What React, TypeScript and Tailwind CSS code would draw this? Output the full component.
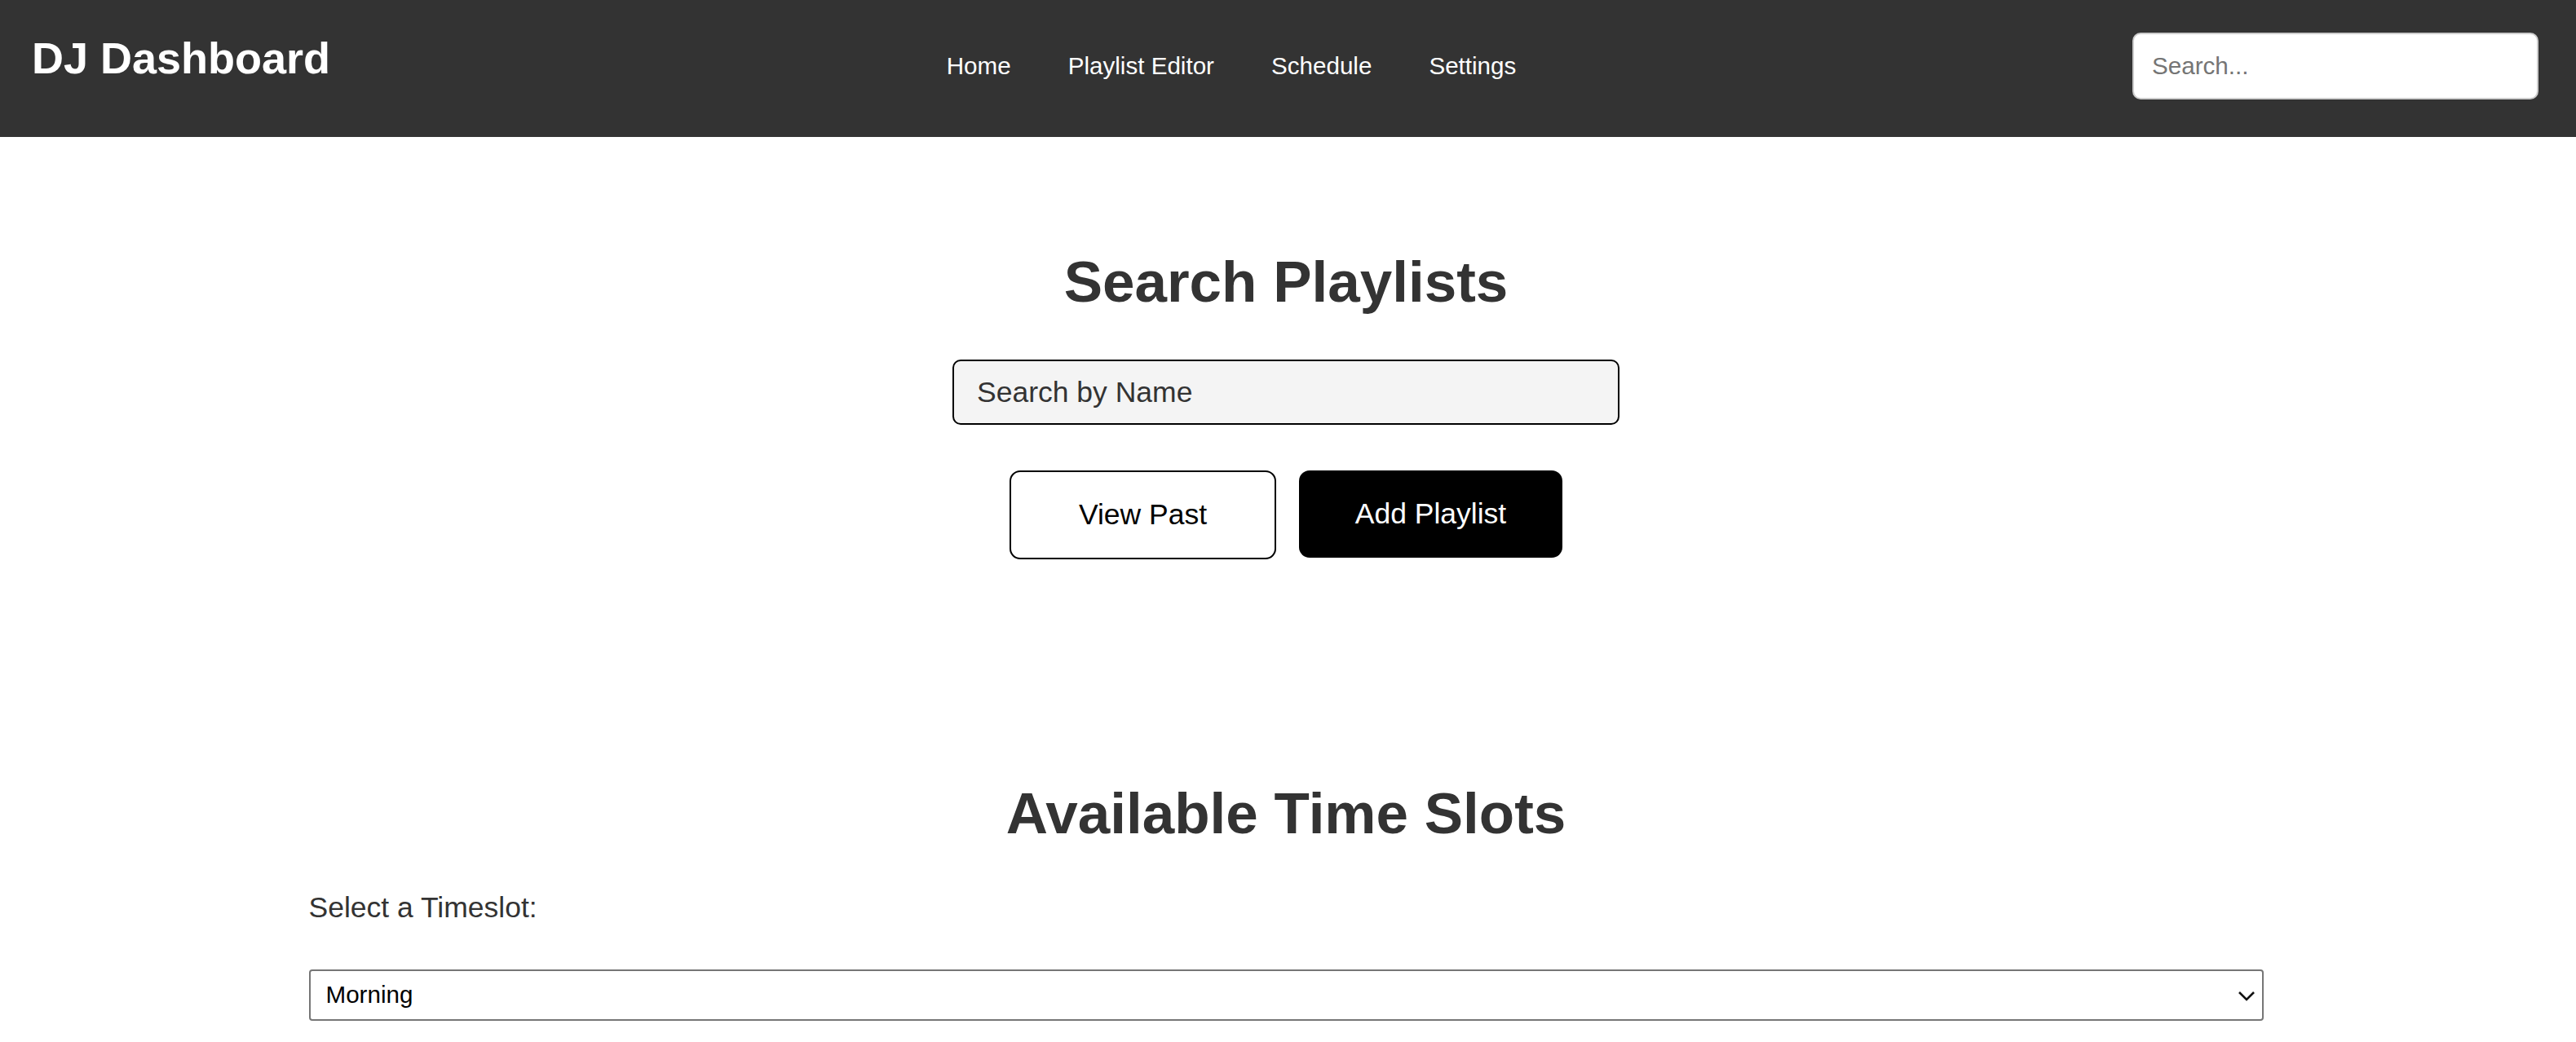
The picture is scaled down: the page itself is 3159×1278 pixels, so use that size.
import React from "react";

export default function App() {
  return (
    <div className="min-h-screen bg-white font-['Liberation_Sans',Arial,sans-serif]">
      <header className="flex h-[168px] items-center justify-between bg-[#333333] pb-[6px] pl-[39px] pr-[46px]">
        <h1 className="mb-[21px] text-[54px] font-bold leading-[62px] text-white">DJ Dashboard</h1>
        <nav className="flex items-center gap-[70px] text-[29.6px] leading-[34px] text-white">
          <a href="#">Home</a>
          <a href="#">Playlist Editor</a>
          <a href="#">Schedule</a>
          <a href="#">Settings</a>
        </nav>
        <input
          type="text"
          placeholder="Search..."
          className="h-[82px] w-[498px] rounded-[10px] border-2 border-[#cccccc] bg-white pl-[22px] text-[29.6px] text-[#333] outline-none placeholder:text-[#757575]"
        />
      </header>

      <main className="pr-[5px]">
        <section className="flex flex-col items-center">
          <h2 className="mt-[137px] text-center text-[71px] font-bold leading-[82px] text-[#333333]">
            Search Playlists
          </h2>
          <input
            type="text"
            placeholder="Search by Name"
            className="mt-[54px] h-[80px] w-[818px] rounded-[10px] border-2 border-black bg-[#f4f4f4] pl-[28px] text-[35.5px] text-[#333] outline-none placeholder:text-[#333333]"
          />
          <div className="mt-[56px] flex items-start gap-[28px]">
            <button className="h-[109px] w-[327px] rounded-[13px] border-2 border-black bg-white text-[35.5px] text-black">
              View Past
            </button>
            <button className="h-[107px] w-[323px] rounded-[13px] bg-black text-[35.5px] text-white">
              Add Playlist
            </button>
          </div>
        </section>

        <section className="mx-auto mt-[271px] w-[2397px]">
          <h2 className="text-center text-[71px] font-bold leading-[82px] text-[#333333]">
            Available Time Slots
          </h2>
          <label className="mt-[54px] block text-[35.5px] leading-[40px] text-[#333333]">
            Select a Timeslot:
          </label>
          <div className="relative mt-[56px]">
            <select className="h-[63px] w-full appearance-none rounded-[4px] border-2 border-[#767676] bg-white pl-[19px] text-[29.6px] text-black outline-none">
              <option>Morning</option>
              <option>Afternoon</option>
              <option>Evening</option>
              <option>Night</option>
            </select>
            <svg
              className="pointer-events-none absolute right-[10px] top-[26px]"
              width="22"
              height="13"
              viewBox="0 0 22 13"
              fill="none"
            >
              <path d="M2 2 L11 11 L20 2" stroke="#111" strokeWidth="2.6" />
            </svg>
          </div>
        </section>
      </main>
    </div>
  );
}
